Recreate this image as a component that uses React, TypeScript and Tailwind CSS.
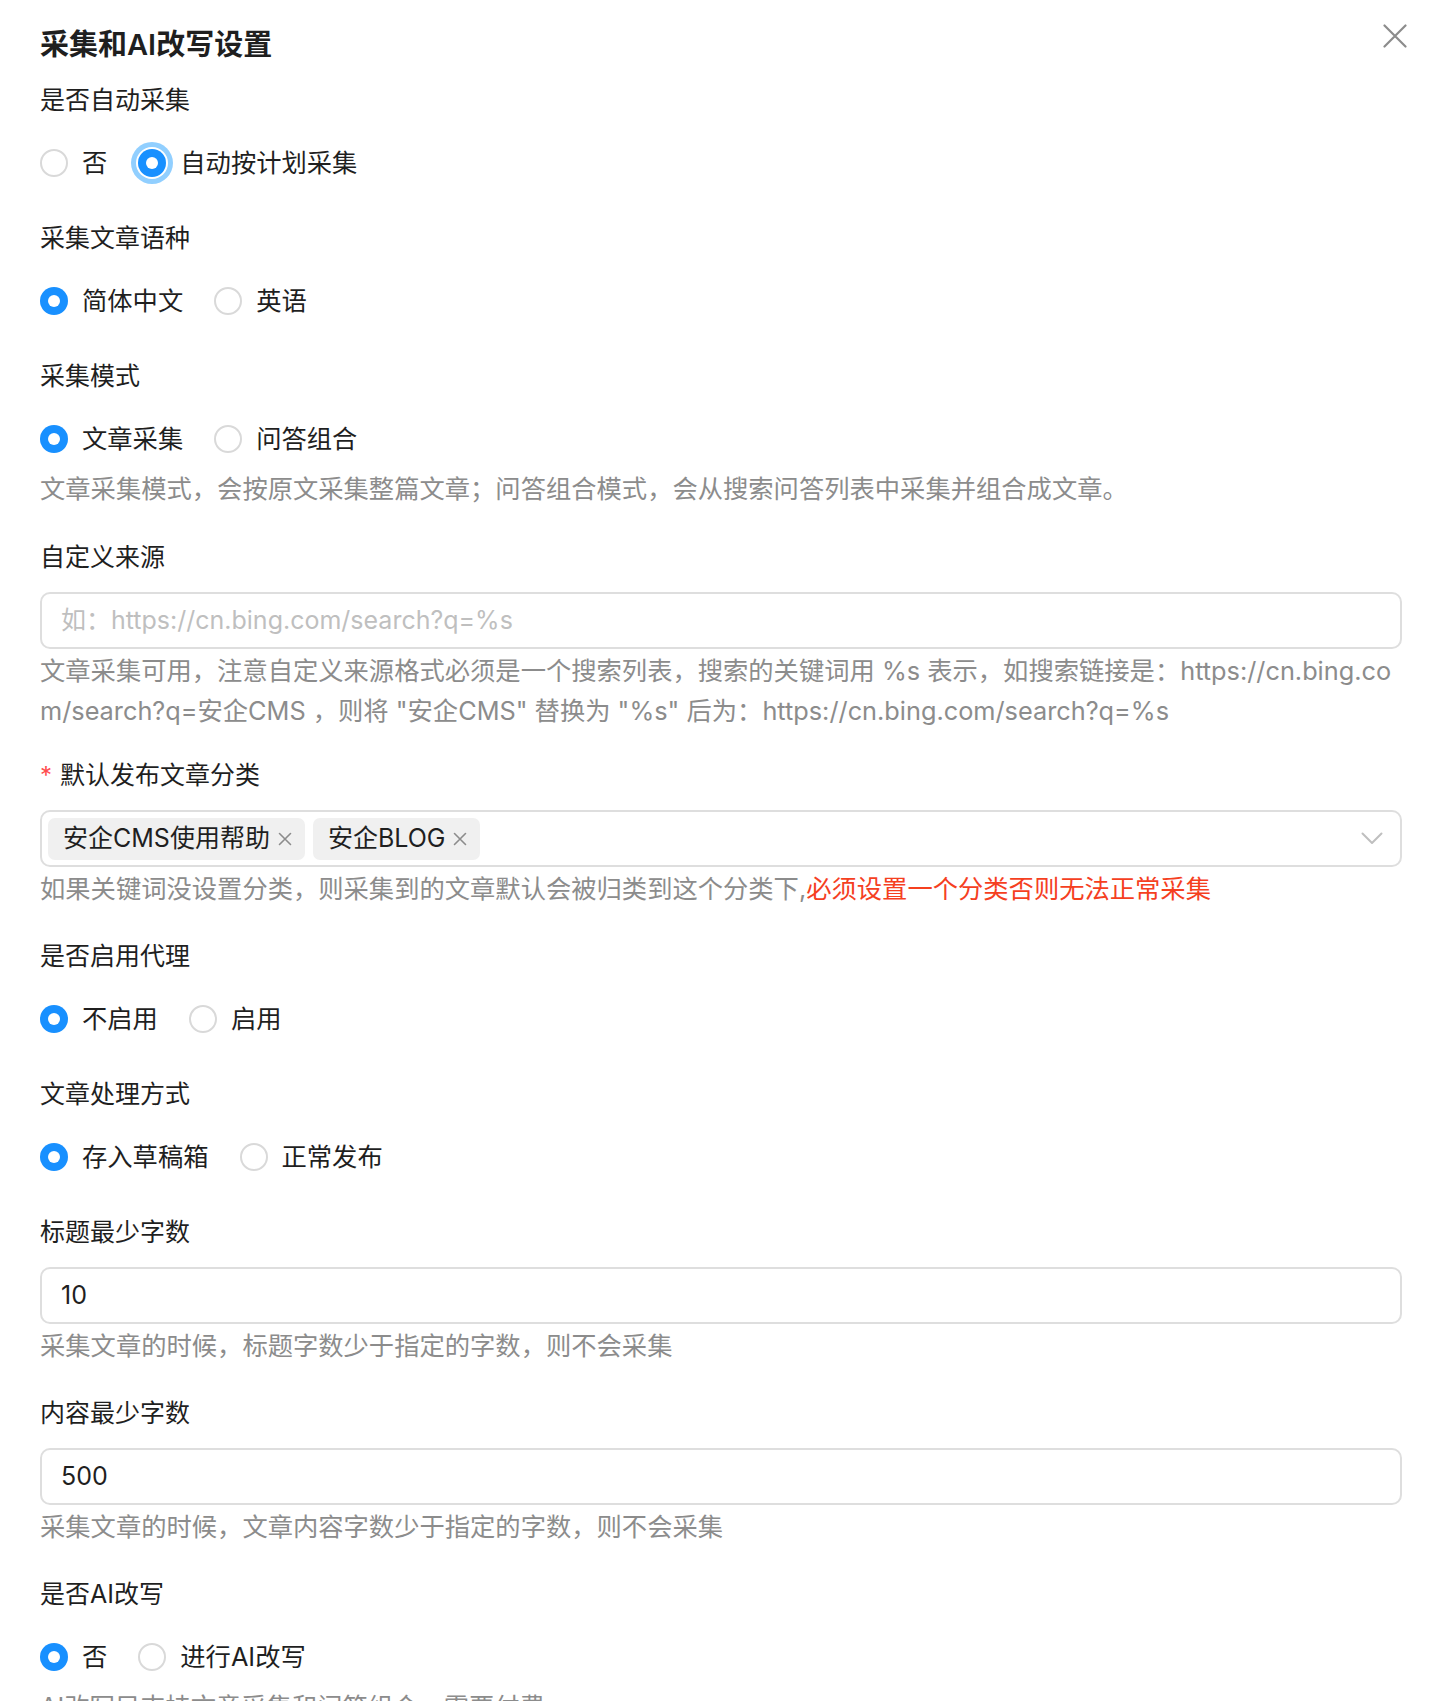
import React, { FC, ReactNode } from 'react';

type RadioProps = { label: string; checked?: boolean; focused?: boolean };

// antd-style radio, scaled up (base 16px circle -> 28px)
const Radio: FC<RadioProps> = ({ label, checked, focused }) => {
  let dot = 'w-[28px] h-[28px] rounded-full border-2 border-[#d9d9d9] bg-white';
  if (checked) dot = 'w-[28px] h-[28px] rounded-full bg-[#1890ff] flex items-center justify-center';
  if (checked && focused)
    dot =
      'w-[28px] h-[28px] rounded-full bg-[#1890ff] flex items-center justify-center shadow-[0_0_0_2px_#ffffff,0_0_0_7px_#91cfff]';
  return (
    <label className="flex items-center mr-[16px] cursor-pointer">
      <span className={dot}>{checked && <span className="w-[12px] h-[12px] rounded-full bg-white" />}</span>
      <span className="pl-[14px] pr-[15px]">{label}</span>
    </label>
  );
};

const RadioGroup: FC<{ options: RadioProps[] }> = ({ options }) => (
  <div className="flex items-center h-[56px] text-[25.3px] text-[#1f1f1f]">
    {options.map((o) => (
      <Radio key={o.label} {...o} />
    ))}
  </div>
);

type FieldProps = {
  label: string;
  required?: boolean;
  help?: ReactNode;
  multiline?: boolean;
  compact?: boolean;
  children: ReactNode;
};

const Field: FC<FieldProps> = ({ label, required, help, multiline, compact, children }) => {
  let mb = 'mb-[28px]';
  if (compact) mb = 'mb-[27px]';
  if (multiline) mb = 'mb-[25px]';
  return (
    <div className={mb}>
      <div className="flex items-center h-[38px] mb-[16px] text-[25px] leading-[38px] text-[#1f1f1f]">
        {required && <span className="text-[#ff4d4f] mr-[8px] text-[24px] leading-none mt-[2px]">*</span>}
        {label}
      </div>
      {children}
      {help && (
        <div
          className={
            multiline
              ? 'pt-[2px] text-[25.3px] leading-[40px] text-[#8c8c8c] break-all'
              : 'pt-[1px] pb-[1px] text-[25.3px] leading-[41px] text-[#8c8c8c] break-all'
          }
        >
          {help}
        </div>
      )}
    </div>
  );
};

const TextInput: FC<{ value?: string; placeholder?: string }> = ({ value, placeholder }) => (
  <div className="h-[57px] rounded-[10px] border-2 border-[#dedede] flex items-center px-[19px] text-[25px]">
    {value ? (
      <span className="text-[#1f1f1f]">{value}</span>
    ) : (
      <span className="text-[#bfbfbf]">{placeholder}</span>
    )}
  </div>
);

const Tag: FC<{ children: ReactNode }> = ({ children }) => (
  <span className="h-[42px] rounded-[7px] bg-[#f0f0f0] flex items-center pl-[15px] pr-[13px] text-[25px] text-[#1f1f1f]">
    {children}
    <svg className="ml-[8px]" width="14" height="14" viewBox="0 0 14 14">
      <path d="M1.5 1.5 L12.5 12.5 M12.5 1.5 L1.5 12.5" stroke="#8c8c8c" strokeWidth="1.6" strokeLinecap="round" />
    </svg>
  </span>
);

const App: FC = () => {
  return (
    <div className="relative w-full h-[1701px] overflow-hidden bg-white pl-[40px] pr-[38px] font-[Inter,'Noto_Sans_CJK_SC',sans-serif]">
      <button className="absolute top-[24px] right-[33px] w-[24px] h-[24px]" aria-label="close">
        <svg width="24" height="24" viewBox="0 0 24 24">
          <path d="M1.5 1.5 L22.5 22.5 M22.5 1.5 L1.5 22.5" stroke="#8c8c8c" strokeWidth="2.2" strokeLinecap="round" />
        </svg>
      </button>

      <div className="pt-[27px] mb-[18px] text-[29px] leading-[36px] font-semibold text-[#1f1f1f]">采集和AI改写设置</div>

      <Field label="是否自动采集">
        <RadioGroup options={[{ label: '否' }, { label: '自动按计划采集', checked: true, focused: true }]} />
      </Field>

      <Field label="采集文章语种">
        <RadioGroup options={[{ label: '简体中文', checked: true }, { label: '英语' }]} />
      </Field>

      <Field label="采集模式" help="文章采集模式，会按原文采集整篇文章；问答组合模式，会从搜索问答列表中采集并组合成文章。">
        <RadioGroup options={[{ label: '文章采集', checked: true }, { label: '问答组合' }]} />
      </Field>

      <Field
        label="自定义来源"
        multiline
        help={
          '文章采集可用，注意自定义来源格式必须是一个搜索列表，搜索的关键词用 %s 表示，如搜索链接是：https://cn.bing.com/search?q=安企CMS ，则将 "安企CMS" 替换为 "%s" 后为：https://cn.bing.com/search?q=%s'
        }
      >
        <TextInput placeholder="如：https://cn.bing.com/search?q=%s" />
      </Field>

      <Field
        label="默认发布文章分类"
        required
        compact
        help={
          <>
            如果关键词没设置分类，则采集到的文章默认会被归类到这个分类下,
            <span className="text-[#f5401f]">必须设置一个分类否则无法正常采集</span>
          </>
        }
      >
        <div className="h-[57px] rounded-[10px] border-2 border-[#dedede] flex items-center pl-[6px] pr-[17px]">
          <div className="flex flex-1 items-center gap-[8px]">
            <Tag>安企CMS使用帮助</Tag>
            <Tag>安企BLOG</Tag>
          </div>
          <svg width="22" height="13" viewBox="0 0 22 13">
            <path d="M1.5 1.5 L11 11 L20.5 1.5" fill="none" stroke="#bfbfbf" strokeWidth="2" strokeLinecap="round" strokeLinejoin="round" />
          </svg>
        </div>
      </Field>

      <Field label="是否启用代理">
        <RadioGroup options={[{ label: '不启用', checked: true }, { label: '启用' }]} />
      </Field>

      <Field label="文章处理方式">
        <RadioGroup options={[{ label: '存入草稿箱', checked: true }, { label: '正常发布' }]} />
      </Field>

      <Field label="标题最少字数" compact help="采集文章的时候，标题字数少于指定的字数，则不会采集">
        <TextInput value="10" />
      </Field>

      <Field label="内容最少字数" compact help="采集文章的时候，文章内容字数少于指定的字数，则不会采集">
        <TextInput value="500" />
      </Field>

      <Field label="是否AI改写" help="AI改写只支持文章采集和问答组合，需要付费">
        <RadioGroup options={[{ label: '否', checked: true }, { label: '进行AI改写' }]} />
      </Field>
    </div>
  );
};

export default App;
